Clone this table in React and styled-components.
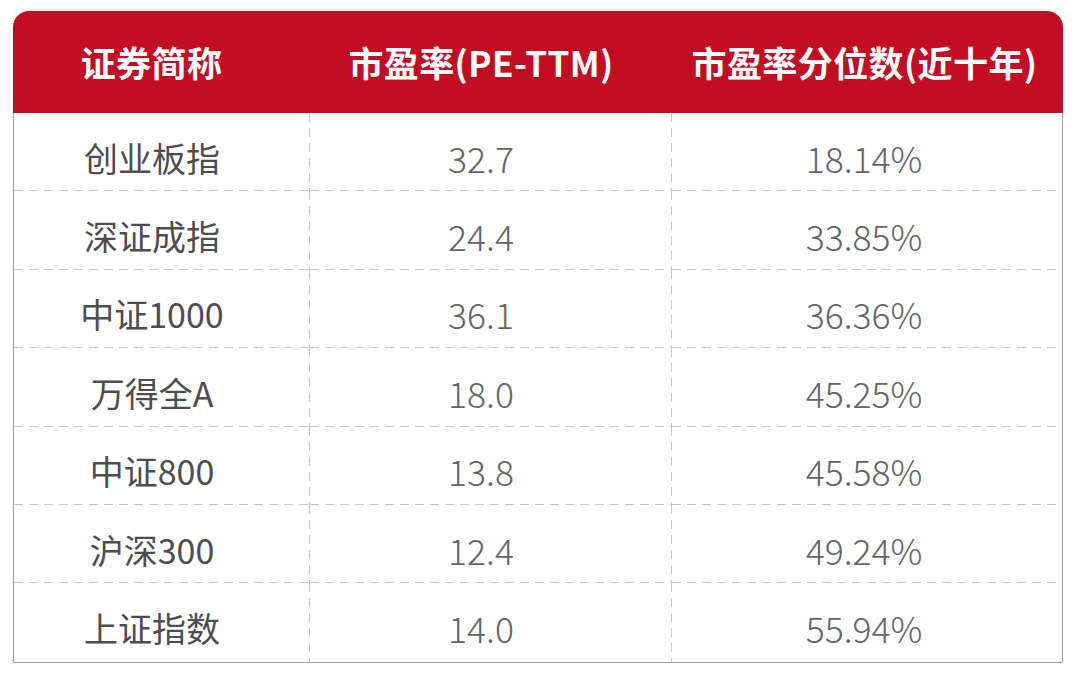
import React from 'react'
import styled, { createGlobalStyle } from 'styled-components'

const GlobalStyle = createGlobalStyle`
    html, body {
        margin: 0;
        padding: 0;
        background: #ffffff;
    }
    body {
        font-family: "Noto Sans CJK SC", "Noto Sans", sans-serif;
    }
`

const COLS = '297px 362px 391px'

const Wrapper = styled.div`
    padding: 11px 0 0 13px;
`

const Table = styled.div`
    width: 1050px;
`

const HeaderRow = styled.div`
    display: grid;
    grid-template-columns: ${COLS};
    height: 102px;
    background: #c30d23;
    border-radius: 16px 16px 0 0;
`

const HeaderCell = styled.div`
    display: flex;
    align-items: center;
    justify-content: center;
    padding-right: ${props => props.$shift}px;
    padding-bottom: 2px;
    color: #ffffff;
    font-size: 35px;
    font-weight: 700;
    letter-spacing: 0.4px;
    white-space: nowrap;
`

const Body = styled.div`
    border: 1px solid #a3a3a3;
    border-top: none;
`

const Row = styled.div`
    display: grid;
    grid-template-columns: 296px 362px 390px;
    height: 78.4px;
`

const dashH = 'repeating-linear-gradient(to right, #c8c8c8 0 9px, transparent 9px 15px)'
const dashV = 'repeating-linear-gradient(to bottom, #c8c8c8 0 9px, transparent 9px 15px)'

const Cell = styled.div`
    display: flex;
    align-items: center;
    justify-content: center;
    padding-right: ${props => props.$shift}px;
    padding-top: 10px;
    box-sizing: border-box;
    color: ${props => (props.$num ? '#646464' : '#4d4d4d')};
    font-size: ${props => (props.$num ? 35.5 : 34)}px;
    font-weight: ${props => (props.$num ? 300 : 400)};
    white-space: nowrap;
    background-image: ${props => [props.$bottom ? dashH : null, props.$right ? dashV : null].filter(Boolean).join(', ') || 'none'};
    background-size: ${props => [props.$bottom ? '100% 1px' : null, props.$right ? '1px 100%' : null].filter(Boolean).join(', ') || 'auto'};
    background-position: ${props => [props.$bottom ? 'left bottom' : null, props.$right ? 'right top' : null].filter(Boolean).join(', ') || '0 0'};
    background-repeat: no-repeat;
`

const rows = [
    ['创业板指', '32.7', '18.14%'],
    ['深证成指', '24.4', '33.85%'],
    ['中证1000', '36.1', '36.36%'],
    ['万得全A', '18.0', '45.25%'],
    ['中证800', '13.8', '45.58%'],
    ['沪深300', '12.4', '49.24%'],
    ['上证指数', '14.0', '55.94%'],
]

const shifts = [20, 20, 6]

const App = () => {
    return (
        <Wrapper>
            <GlobalStyle />
            <Table>
                <HeaderRow>
                    <HeaderCell $shift={shifts[0]}>证券简称</HeaderCell>
                    <HeaderCell $shift={shifts[1]}>市盈率(PE-TTM)</HeaderCell>
                    <HeaderCell $shift={shifts[2]}>市盈率分位数(近十年)</HeaderCell>
                </HeaderRow>
                <Body>
                    {rows.map((row, i) => (
                        <Row key={row[0]}>
                            {row.map((value, j) => (
                                <Cell
                                    key={j}
                                    $num={j > 0}
                                    $shift={shifts[j]}
                                    $bottom={i < rows.length - 1}
                                    $right={j < row.length - 1}
                                >
                                    {value}
                                </Cell>
                            ))}
                        </Row>
                    ))}
                </Body>
            </Table>
        </Wrapper>
    )
}

export default App
